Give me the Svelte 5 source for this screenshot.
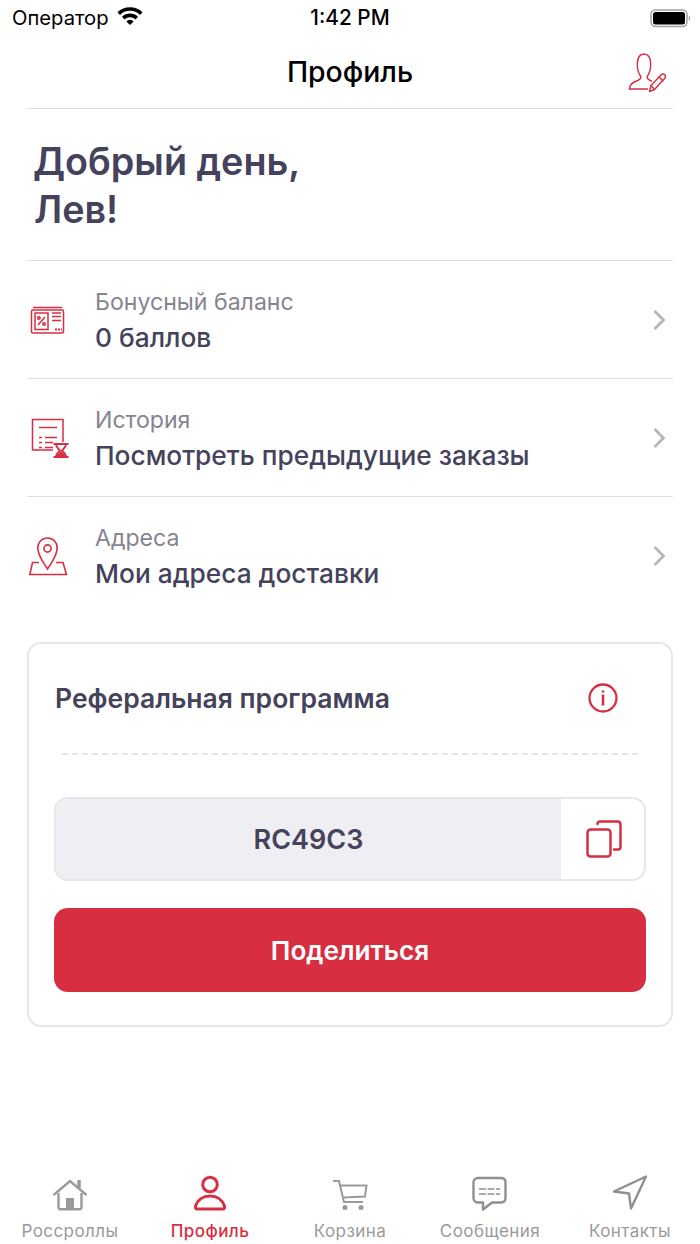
<script>
  const rows = [
    { label: 'Бонусный баланс', value: '0 баллов', icon: 'bonus' },
    { label: 'История', value: 'Посмотреть предыдущие заказы', icon: 'history' },
    { label: 'Адреса', value: 'Мои адреса доставки', icon: 'address' }
  ];
  const tabs = [
    { label: 'Россроллы', icon: 'home' },
    { label: 'Профиль', icon: 'user', active: true },
    { label: 'Корзина', icon: 'cart' },
    { label: 'Сообщения', icon: 'chat' },
    { label: 'Контакты', icon: 'nav' }
  ];
</script>

<div class="page">
  <div class="status">
    <div class="st-left">
      <span>Оператор</span>
      <svg width="28" height="20" viewBox="0 0 28 20" class="wifi"><path d="M1.5 7.2 A18 18 0 0 1 26.5 7.2 L24 9.9 A14.4 14.4 0 0 0 4 9.9Z M6 11.8 A11.6 11.6 0 0 1 22 11.8 L19.5 14.4 A8 8 0 0 0 8.500 14.400Z M10.400 16.400 A5 5 0 0 1 17.600 16.400 L14 20Z" fill="#000"/></svg>
    </div>
    <div class="time">1:42 PM</div>
    <svg class="battery" width="42" height="20" viewBox="0 0 42 20">
      <rect x="1" y="2" width="36" height="16.500" rx="4.500" fill="none" stroke="#a3a3a3" stroke-width="1.500"/>
      <rect x="3" y="4" width="32" height="12.500" rx="2.500" fill="#000"/>
      <path d="M38.800 7.500 C40.500 8 40.500 12.500 38.800 13Z" fill="#a3a3a3"/>
    </svg>
  </div>

  <header class="nav">
    <h1>Профиль</h1>
    <svg class="edit" width="42" height="42" viewBox="0 0 42 42" fill="none" stroke="#d72e41" stroke-width="1.400" stroke-linejoin="round" stroke-linecap="round">
      <path d="M3.500 38 C3.500 33.500 6.500 31.500 10.500 30 C13.500 29 15 28 14.800 25.500 C12.500 22.500 11.300 18 11.300 13.500 C11.300 7 13.800 3 18 3 C22.200 3 24.700 7 24.700 13.500 C24.700 18 23.500 22.500 21.200 25.500 C21 28 22.500 29 25.500 30"/>
      <path d="M3.500 38 L21.500 38"/>
      <path d="M23.500 40.500 L25 34.500 L35 24 C36.200 22.800 37.700 22.800 38.700 23.800 C39.700 24.800 39.700 26.300 38.600 27.500 L28.500 38.500Z"/>
      <path d="M25 34.500 L28.500 38.500 M33 26 L36.800 29.700"/>
    </svg>
  </header>

  <div class="greeting">Добрый день,<br />Лев!</div>

  <div class="list">
    {#each rows as r}
      <div class="row">
        <div class="icon">
          {#if r.icon === 'bonus'}
            <svg width="36" height="30" viewBox="0 0 36 30" fill="none" stroke="#d72e41" stroke-width="1.500">
              <path d="M4 2.500 H33" />
              <rect x="2.500" y="5" width="32" height="23" rx="1.500" />
              <rect x="6" y="8" width="13" height="16.500" />
              <path d="M9 20 L16 12" />
              <circle cx="9.800" cy="13" r="1.300" />
              <circle cx="15" cy="19" r="1.300" />
              <path d="M23 8 H32 M23 11.500 H32 M23 15.500 H32" />
              <path d="M26 24.500 H33" stroke-dasharray="2 1" stroke-width="2" />
            </svg>
          {:else if r.icon === 'history'}
            <svg width="42" height="40" viewBox="0 0 42 40" fill="none" stroke="#d72e41" stroke-width="1.500">
              <path d="M24 32 H3.500 V1.500 H34 V24" />
              <path d="M10 9.500 H28" />
              <path d="M10 19.500 H13 M16 19.500 H28 M10 24.500 H13 M16 24.500 H24 M10 29.500 H13 M16 29.500 H24" />
              <path d="M24.500 26 H39.500 M24.500 39 H39.500" stroke-width="2.200" />
              <path d="M27 26 C27 30 30 31 31 32.500 C30 34 27 35 27 39 M37 26 C37 30 34 31 33 32.500 C34 34 37 35 37 39" stroke-width="1.800" />
              <path d="M27.500 38.500 L32 34 L36.500 38.500Z" fill="#d72e41" />
            </svg>
          {:else}
            <svg width="40" height="40" viewBox="0 0 40 40" fill="none" stroke="#d72e41" stroke-width="1.600">
              <path d="M18.500 33 C14 26 8.800 19.500 8.800 12 C8.800 6 13 2 18.500 2 C24 2 28.200 6 28.200 12 C28.200 19.500 23 26 18.500 33Z" />
              <circle cx="18.500" cy="12.500" r="3.600" />
              <path d="M10 26.500 H3.500 L0.800 38.500 H37.500 L34 26.500 H27" />
            </svg>
          {/if}
        </div>
        <div class="txt">
          <div class="label">{r.label}</div>
          <div class="value">{r.value}</div>
        </div>
        <svg class="chev" width="14" height="22" viewBox="0 0 14 22" fill="none"><path d="M2.500 2 L11.500 11 L2.500 20" stroke="#b5b5bb" stroke-width="2.800" /></svg>
      </div>
    {/each}
  </div>

  <section class="card">
    <div class="card-head">
      <span class="card-title">Реферальная программа</span>
      <svg class="info" width="30" height="30" viewBox="0 0 30 30" fill="none" stroke="#d72e41">
        <circle cx="15" cy="15" r="13.500" stroke-width="2.300" />
        <path d="M15 11.500 V22.500" stroke-width="2.500" />
        <path d="M15 7.500 V9.500" stroke-width="2.700" />
      </svg>
    </div>
    <div class="dash"></div>
    <div class="code">
      <div class="code-text">RC49C3</div>
      <div class="copy">
        <svg width="38" height="38" viewBox="0 0 38 38" fill="none" stroke="#d72e41" stroke-width="2.500" stroke-linejoin="round" stroke-linecap="round">
          <path d="M13.500 4 C13.500 2.200 14.500 1.500 16 1.500 H33.500 C35.500 1.500 36.500 2.500 36.500 4.500 V27 C36.500 28.800 35.500 29.500 34 29.500 H30" />
          <rect x="3.500" y="9.500" width="23" height="27" rx="3" />
        </svg>
      </div>
    </div>
    <button class="share">Поделиться</button>
  </section>

  <nav class="tabs">
    {#each tabs as t}
      <div class="tab" class:active={t.active}>
        <div class="tab-icon">
          {#if t.icon === 'home'}
            <svg width="36" height="32" viewBox="0 0 36 32" fill="none" stroke="#9a9a9a" stroke-width="2.400">
              <path d="M1.500 16 L18 2 L34.500 16" stroke-linejoin="miter" />
              <path d="M27 9 V1" stroke-width="3.500" />
              <path d="M6.500 14 V28 C6.500 29.500 7.500 30.200 8.500 30.200 H27.500 C28.500 30.200 29.500 29.500 29.500 28 V14" />
              <rect x="14" y="19" width="8" height="11.500" fill="#9a9a9a" stroke="none" />
            </svg>
          {:else if t.icon === 'user'}
            <svg width="36" height="38" viewBox="0 0 36 38" fill="none" stroke="#d72e41" stroke-width="3">
              <circle cx="18" cy="11.500" r="7.300" />
              <path d="M5.500 36 C3.500 36 3 34.800 3.600 33 C5.500 27 11 23 18 23 C25 23 30.500 27 32.400 33 C33 34.800 32.500 36 30.500 36Z" stroke-linejoin="round" />
            </svg>
          {:else if t.icon === 'cart'}
            <svg width="36" height="32" viewBox="0 0 36 32" fill="none" stroke="#9a9a9a" stroke-width="2">
              <path d="M1 2 H7 L12 23 H31" />
              <path d="M8 6.500 H34.500 L33 17.500 L10.500 18.500" />
              <circle cx="13" cy="28.500" r="2.500" fill="#9a9a9a" stroke="none" />
              <circle cx="29" cy="28.500" r="2.500" fill="#9a9a9a" stroke="none" />
            </svg>
          {:else if t.icon === 'chat'}
            <svg width="36" height="36" viewBox="0 0 36 36" fill="none" stroke="#8f8f8f" stroke-width="2.400" stroke-linejoin="round">
              <path d="M6 3 H29 C31.700 3 33.500 4.800 33.500 7.500 V23 C33.500 25.700 31.700 27.500 29 27.500 H20 L11 34.500 V27.500 H6 C3.300 27.500 1.500 25.700 1.500 23 V7.500 C1.500 4.800 3.300 3 6 3Z" />
              <path d="M7 14 H28 M7 19 H28" stroke-width="1.600" stroke-dasharray="7 1.500" />
            </svg>
          {:else}
            <svg width="36" height="36" viewBox="0 0 36 36" fill="none" stroke="#8f8f8f" stroke-width="2.400" stroke-linejoin="round">
              <path d="M34 1.500 L2 16.500 L17 18.500 L19 33.500Z" />
            </svg>
          {/if}
        </div>
        <span>{t.label}</span>
      </div>
    {/each}
  </nav>
</div>

<style>
  :global(body) { margin: 0; background: #fff; }
  .page {
    width: 700px;
    height: 1244px;
    display: flex;
    flex-direction: column;
    font-family: Inter, "Liberation Sans", sans-serif;
    color: #44425c;
    overflow: hidden;
  }
  .status {
    height: 36px;
    box-sizing: border-box;
    padding: 0 8px 2px 12px;
    display: flex;
    align-items: center;
    justify-content: space-between;
    color: #000;
    font-size: 20.2px;
    position: relative;
    flex: none;
  }
  .st-left { display: flex; align-items: center; gap: 7px; }
  .wifi { margin-top: -5px; }
  .time {
    position: absolute;
    left: 0;
    right: 0;
    text-align: center;
    font-size: 20.8px;
    font-weight: 500;
  }
  .battery { margin-top: 2px; }
  .nav {
    margin: 0 27px;
    height: 72px;
    flex: none;
    border-bottom: 1px solid #dedee2;
    display: flex;
    align-items: center;
    justify-content: flex-end;
    position: relative;
    box-sizing: content-box;
  }
  h1 {
    position: absolute;
    left: 0;
    right: 0;
    margin: 0 0 2px;
    text-align: center;
    font-size: 28.4px;
    font-weight: 500;
    color: #000;
  }
  .edit { margin: 0 5px 0 0; }
  .greeting {
    margin: 0 27px;
    padding: 28px 7px 28px;
    height: 95px;
    font-size: 37.700px;
    line-height: 48px;
    font-weight: 600;
    border-bottom: 1px solid #dedee2;
    flex: none;
    text-indent: -1px;
  }
  .list { margin: 0 27px; flex: none; }
  .row {
    height: 117px;
    display: flex;
    align-items: center;
    border-bottom: 1px solid #dedee2;
  }
  .row:last-child { border-bottom: none; }
  .icon { width: 68px; flex: none; display: flex; padding-left: 2px; box-sizing: border-box; }
  .txt { flex: 1; padding-top: 3px; }
  .label { font-size: 23.100px; line-height: 30px; color: #85848f; }
  .value { font-size: 26.300px; line-height: 36px; font-weight: 500; margin-top: 3px; }
  .chev { margin-right: 7px; }
  .card {
    margin: 28px 27px 0;
    height: 385px;
    box-sizing: border-box;
    border: 2px solid #e6e6ec;
    border-radius: 14px;
    padding: 0 25px;
    flex: none;
  }
  .card-head {
    height: 109px;
    box-sizing: border-box;
    padding: 0 28px 2px 1px;
    display: flex;
    align-items: center;
    justify-content: space-between;
  }
  .card-title { font-size: 26.500px; font-weight: 600; }
  .dash {
    margin: 0 8px;
    border-top: 2px dashed #e3e3ea;
  }
  .code {
    margin-top: 42px;
    height: 84px;
    box-sizing: border-box;
    border: 2px solid #e6e6ec;
    border-radius: 14px;
    display: flex;
    overflow: hidden;
  }
  .code-text {
    flex: 1;
    background: #eeeef3;
    display: flex;
    align-items: center;
    justify-content: center;
    font-size: 27px;
    font-weight: 600;
  }
  .copy {
    width: 83px;
    flex: none;
    display: flex;
    align-items: center;
    justify-content: center;
  }
  .share {
    display: block;
    width: 100%;
    height: 84px;
    margin-top: 27px;
    border: none;
    border-radius: 14px;
    background: #d72e41;
    color: #fff;
    font-family: inherit;
    font-size: 26.200px;
    font-weight: 600;
  }
  .tabs {
    margin-top: auto;
    height: 78px;
    display: grid;
    grid-template-columns: repeat(5, 140px);
    flex: none;
  }
  .tab {
    display: flex;
    flex-direction: column;
    align-items: center;
    color: #9a9a9a;
    font-size: 17px;
    letter-spacing: 0.45px;
  }
  .tab.active { color: #d72e41; font-weight: 500; }
  .tab-icon { height: 50px; display: flex; align-items: flex-end; padding-bottom: 5px; box-sizing: border-box; }
  .tab span { line-height: 22px; margin-top: 4px; }
</style>
